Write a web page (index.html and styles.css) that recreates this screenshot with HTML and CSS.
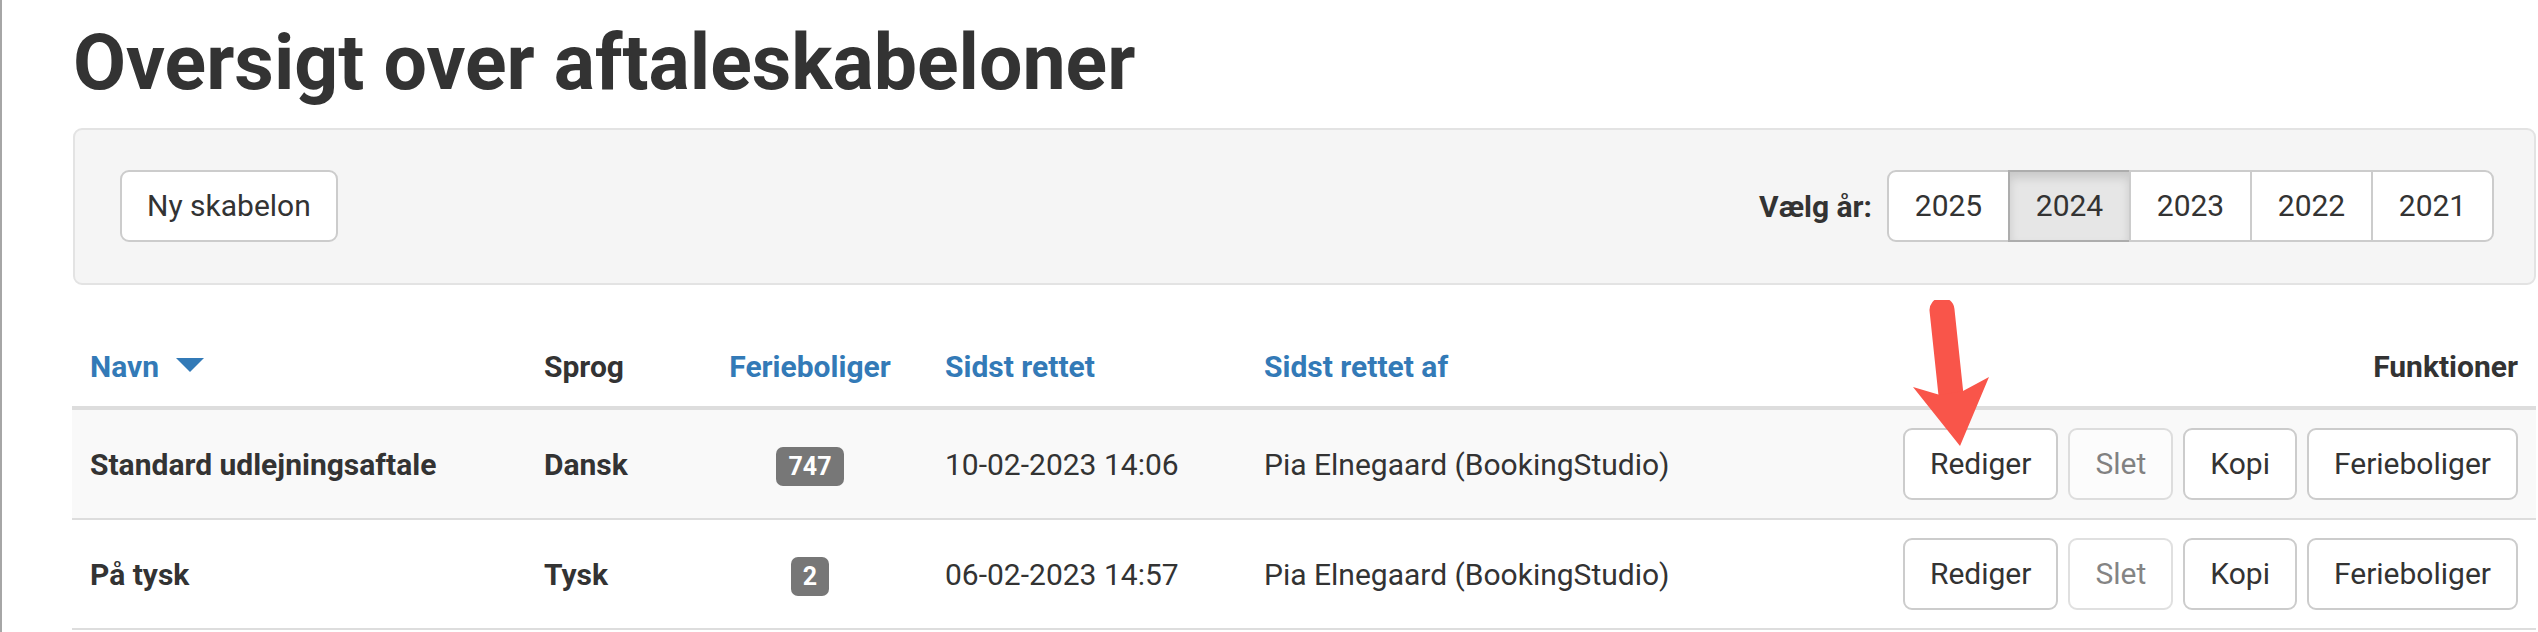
FILE: index.html
```html
<!DOCTYPE html>
<html lang="da">
<head>
<meta charset="UTF-8" />
<title>Oversigt over aftaleskabeloner</title>
<link rel="stylesheet" href="styles.css">
</head>
<body>
  <div class="page">
    <h1>Oversigt over aftaleskabeloner</h1>

    <div class="well">
      <button class="btn">Ny skabelon</button>
      <div class="year-picker">
        <span class="year-label">Vælg år:</span>
        <div class="btn-group">
          <button class="btn">2025</button>
          <button class="btn active">2024</button>
          <button class="btn">2023</button>
          <button class="btn">2022</button>
          <button class="btn">2021</button>
        </div>
      </div>
    </div>

    <table class="templates">
      <thead>
        <tr>
          <th class="col-name"><a href="#">Navn</a><span class="caret"></span></th>
          <th class="col-lang">Sprog</th>
          <th class="col-homes"><a href="#">Ferieboliger</a></th>
          <th class="col-date"><a href="#">Sidst rettet</a></th>
          <th class="col-user"><a href="#">Sidst rettet af</a></th>
          <th class="col-actions">Funktioner</th>
        </tr>
      </thead>
      <tbody>
        <tr>
          <td class="name">Standard udlejningsaftale</td>
          <td class="name">Dansk</td>
          <td class="col-homes"><span class="badge">747</span></td>
          <td>10-02-2023 14:06</td>
          <td>Pia Elnegaard (BookingStudio)</td>
          <td>
            <div class="actions">
              <button class="btn">Rediger</button>
              <button class="btn disabled">Slet</button>
              <button class="btn">Kopi</button>
              <button class="btn">Ferieboliger</button>
            </div>
          </td>
        </tr>
        <tr>
          <td class="name">På tysk</td>
          <td class="name">Tysk</td>
          <td class="col-homes"><span class="badge">2</span></td>
          <td>06-02-2023 14:57</td>
          <td>Pia Elnegaard (BookingStudio)</td>
          <td>
            <div class="actions">
              <button class="btn">Rediger</button>
              <button class="btn disabled">Slet</button>
              <button class="btn">Kopi</button>
              <button class="btn">Ferieboliger</button>
            </div>
          </td>
        </tr>
      </tbody>
    </table>
  </div>

  <!-- red annotation arrow pointing at "Rediger" -->
  <svg class="arrow" width="100" height="160" viewBox="0 0 100 160">
    <path d="M42 10 L51 95" stroke="#f9554a" stroke-width="25" stroke-linecap="round" fill="none" />
    <polygon points="13,87 40,95 63,91 89,77 60,146" fill="#f9554a" />
  </svg>
</body>
</html>
```

FILE: styles.css
```css
body {
  margin: 0;
  border-left: 2px solid #a6a6a6;
  min-height: 632px;
  box-sizing: border-box;
  font-family: Roboto, "Liberation Sans", sans-serif;
  font-size: 30px;
  line-height: 43px;
  color: #333;
  background: #fff;
}
.page {
  padding: 0 2px 0 70px;
}
h1 {
  font-size: 77px;
  line-height: 86px;
  font-weight: bold;
  margin: 20px 0 22px 1px;
  color: #333;
}

.btn {
  font-family: inherit;
  font-size: 30px;
  line-height: 42px;
  color: #333;
  background: #fff;
  border: 2px solid #ccc;
  border-radius: 9px;
  padding: 13px 25px;
  cursor: pointer;
}
.btn.active {
  background: #e6e6e6;
  border-color: #adadad;
  box-shadow: inset 0 6px 10px rgba(0, 0, 0, 0.125);
}
.btn.disabled {
  opacity: 0.6;
  cursor: not-allowed;
}

.well {
  display: flex;
  align-items: center;
  justify-content: space-between;
  margin-left: 1px;
  padding: 40px 40px 41px 45px;
  background: #f5f5f5;
  border: 2px solid #e3e3e3;
  border-radius: 9px;
  margin-bottom: 42px;
}
.year-picker {
  display: flex;
  align-items: center;
}
.year-label {
  font-weight: bold;
  margin-right: 15px;
}
.btn-group {
  display: flex;
}
.btn-group .btn {
  border-radius: 0;
  margin-left: -2px;
  width: 123px;
  padding-left: 0;
  padding-right: 0;
}
.btn-group .btn:first-child {
  margin-left: 0;
  border-radius: 9px 0 0 9px;
}
.btn-group .btn:last-child {
  border-radius: 0 9px 9px 0;
}

.templates {
  width: 100%;
  border-collapse: collapse;
  table-layout: fixed;
}
.templates th {
  text-align: left;
  font-weight: bold;
  padding: 18px;
  border-bottom: 4px solid #ddd;
  vertical-align: bottom;
}
.templates th a {
  color: #337ab7;
  text-decoration: none;
}
.templates td {
  padding: 18px;
  border-top: 2px solid #ddd;
  vertical-align: middle;
}
.templates tbody tr:nth-child(odd) {
  background: #f9f9f9;
}
.templates tbody tr:last-child td {
  border-bottom: 2px solid #ddd;
}
.templates .name {
  font-weight: bold;
}
.col-name { width: 418px; }
.col-lang { width: 149px; }
.col-homes {
  width: 162px;
  text-align: center;
}
.templates .col-homes {
  padding-right: 36px;
  text-align: center;
}
.col-date { width: 283px; }
.col-user { width: 606px; }
.templates .col-actions {
  width: 612px;
  text-align: right;
}

.caret {
  display: inline-block;
  margin-left: 17px;
  border-left: 14px solid transparent;
  border-right: 14px solid transparent;
  border-top: 14px solid #337ab7;
  vertical-align: 5px;
}

.badge {
  display: inline-block;
  background: #777;
  color: #fff;
  font-weight: bold;
  font-size: 25px;
  line-height: 25px;
  padding: 7px 12px;
  border-radius: 7px;
}

.actions {
  display: flex;
  justify-content: flex-end;
  gap: 10px;
}

.arrow {
  position: absolute;
  left: 1900px;
  top: 300px;
}
```
